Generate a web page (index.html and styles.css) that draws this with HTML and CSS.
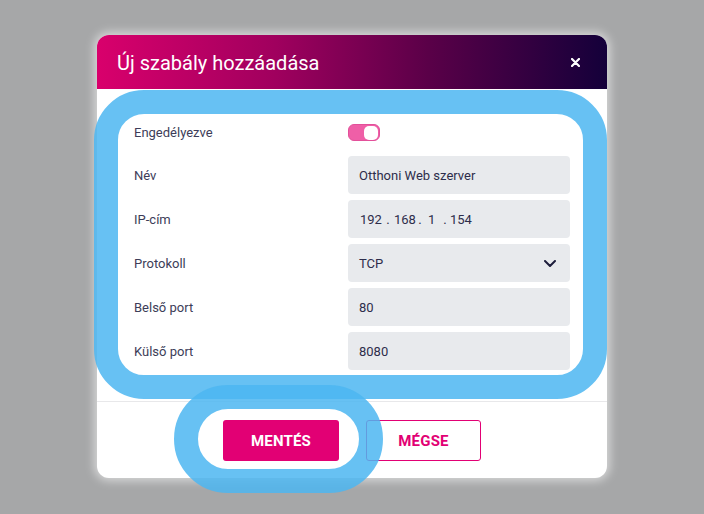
FILE: index.html
```html
<!DOCTYPE html>
<html lang="hu">
<head>
<meta charset="utf-8">
<title>Új szabály hozzáadása</title>
<link rel="stylesheet" href="styles.css">
</head>
<body>
<div class="page">
  <div class="modal">
    <div class="modal-header">
      <h1 class="modal-title">Új szabály hozzáadása</h1>
      <button class="close-btn" aria-label="Bezárás">
        <svg width="9" height="9" viewBox="0 0 9 9"><path d="M1 1 L8 8 M8 1 L1 8" stroke="#fff" stroke-width="2.2" stroke-linecap="round"/></svg>
      </button>
    </div>
    <div class="modal-body">
      <div class="row row-toggle">
        <span class="label">Engedélyezve</span>
        <span class="toggle"><span class="knob"></span></span>
      </div>
      <div class="row">
        <span class="label">Név</span>
        <div class="field">Otthoni Web szerver</div>
      </div>
      <div class="row">
        <span class="label">IP-cím</span>
        <div class="field ip">
          <span class="seg s1">192</span><span class="dot d1">.</span><span class="seg s2">168</span><span class="dot d2">.</span><span class="seg s3">1</span><span class="dot d3">.</span><span class="seg s4">154</span>
        </div>
      </div>
      <div class="row">
        <span class="label">Protokoll</span>
        <div class="field select">
          <span>TCP</span>
          <svg class="chevron" width="12" height="7" viewBox="0 0 12 7"><path d="M1 1 L6 6 L11 1" fill="none" stroke="#1e1e3c" stroke-width="2" stroke-linecap="round" stroke-linejoin="round"/></svg>
        </div>
      </div>
      <div class="row">
        <span class="label">Belső port</span>
        <div class="field">80</div>
      </div>
      <div class="row">
        <span class="label">Külső port</span>
        <div class="field">8080</div>
      </div>
    </div>
    <div class="modal-footer">
      <button class="btn btn-primary">MENTÉS</button>
      <button class="btn btn-outline">MÉGSE</button>
    </div>
    <div class="highlight highlight-form"></div>
    <div class="highlight highlight-save"></div>
  </div>
</div>
</body>
</html>
```

FILE: styles.css
```css
* { box-sizing: border-box; }

html, body {
  margin: 0;
  padding: 0;
}

body {
  background: #a6a7a8;
  font-family: "Roboto", "Noto Sans", sans-serif;
  width: 704px;
  height: 514px;
  overflow: hidden;
}

.page {
  display: flex;
  justify-content: center;
  padding-top: 35px;
}

.modal {
  position: relative;
  width: 510px;
  background: #fff;
  border-radius: 12px;
  box-shadow: 0 0 10px 3px rgba(255, 255, 255, 0.55);
}

.modal-header {
  height: 54px;
  display: flex;
  align-items: center;
  justify-content: space-between;
  padding: 0 27px 0 20px;
  border-radius: 12px 12px 0 0;
  background: linear-gradient(90deg, #d9006c 0%, #a0005e 35%, #5a0048 65%, #14003a 100%);
}

.modal-title {
  margin: 0;
  font-size: 20px;
  font-weight: 400;
  color: #fff;
  padding-top: 2px;
}

.close-btn {
  border: 0;
  background: transparent;
  padding: 0;
  width: 9px;
  height: 9px;
  display: flex;
  cursor: pointer;
}

.modal-body {
  display: flex;
  flex-direction: column;
  gap: 6px;
  padding: 35px 37px 31px;
  border-bottom: 1px solid #e8e8ea;
}

.row {
  display: flex;
  align-items: center;
  height: 38px;
}

.row-toggle {
  height: 17px;
  margin-bottom: 9px;
}

.label {
  width: 214px;
  flex: none;
  font-size: 13px;
  color: #3d3d58;
}

.toggle {
  position: relative;
  width: 32px;
  height: 17px;
  border-radius: 6px;
  background: #ef5fa7;
  border: 1px solid #e3509a;
  display: flex;
  justify-content: flex-end;
  align-items: center;
  padding-right: 1px;
}

.knob {
  width: 14px;
  height: 14px;
  border-radius: 5px;
  background: #fff;
}

.field {
  flex: 1;
  height: 38px;
  border-radius: 4px;
  background: #e8eaed;
  display: flex;
  align-items: center;
  padding: 0 14px 0 11px;
  font-size: 13px;
  color: #2d2d4b;
}

.ip { padding-left: 12px; }
.ip .seg, .ip .dot { display: block; flex: none; }
.ip .s1 { width: 22px; }
.ip .d1 { width: 12px; text-align: center; }
.ip .s2 { width: 21px; }
.ip .d2 { width: 10px; text-align: center; }
.ip .s3 { width: 15px; padding-left: 3px; }
.ip .d3 { width: 10px; text-align: center; }
.ip .s4 { width: 22px; }

.select {
  justify-content: space-between;
}

.chevron { display: block; }

.modal-footer {
  display: flex;
  justify-content: center;
  gap: 27px;
  padding: 18px 0 17px;
}

.btn {
  height: 41px;
  border-radius: 3px;
  font-family: "Roboto", "Noto Sans", sans-serif;
  font-size: 15px;
  font-weight: 700;
  letter-spacing: 0.2px;
  cursor: pointer;
}

.btn-primary {
  width: 116px;
  background: #e20074;
  border: 0;
  color: #fff;
}

.btn-outline {
  width: 115px;
  background: #fff;
  border: 1.5px solid #e20074;
  color: #e20074;
}

.highlight {
  position: absolute;
  border: 24px solid rgba(76, 182, 241, 0.85);
  pointer-events: none;
}

.highlight-form {
  left: -3px;
  top: 55px;
  width: 513px;
  height: 309px;
  border-radius: 50px;
}

.highlight-save {
  left: 77px;
  top: 350px;
  width: 209px;
  height: 108px;
  border-radius: 54px;
}
```
